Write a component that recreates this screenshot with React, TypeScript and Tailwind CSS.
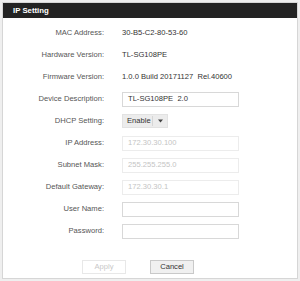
import React from 'react';

const font = { fontFamily: '"Liberation Sans", Arial, sans-serif' };

interface RowProps {
    label: string;
    children: React.ReactNode;
}

const Row: React.FC<RowProps> = ({ label, children }) => (
    <div className="flex items-center h-[22px]">
        <div className="w-[101px] text-right text-[7.6px] text-[#555]">{label}</div>
        <div className="ml-[18px] flex items-center">{children}</div>
    </div>
);

const TextBox: React.FC<{ value?: string; disabled?: boolean }> = ({ value = '', disabled }) => (
    <div
        className={`w-[117px] h-[15px] border flex items-center pl-[5px] text-[7.6px] whitespace-pre ${
            disabled ? 'border-[#ececec] text-[#c4c4c4]' : 'border-[#d8d8d8] text-[#333]'
        } bg-white`}
    >
        {value}
    </div>
);

export default function App() {
    return (
        <div className="w-[300px] h-[281px] bg-[#efefef] p-[2px]" style={font}>
            <div className="h-full bg-white border border-[#d6d6d6] flex flex-col">
                <div className="h-[15px] bg-[#232323] flex items-center pl-[10px] text-white font-bold text-[7.8px]">
                    IP Setting
                </div>
                <div className="mt-[4px] flex flex-col">
                    <Row label="MAC Address:">
                        <span className="text-[7.6px] text-[#333]">30-B5-C2-80-53-60</span>
                    </Row>
                    <Row label="Hardware Version:">
                        <span className="text-[7.6px] text-[#333]">TL-SG108PE</span>
                    </Row>
                    <Row label="Firmware Version:">
                        <span className="text-[7.6px] text-[#333] whitespace-pre">1.0.0 Build 20171127  Rel.40600</span>
                    </Row>
                    <Row label="Device Description:">
                        <TextBox value="TL-SG108PE  2.0" />
                    </Row>
                    <Row label="DHCP Setting:">
                        <div className="w-[46px] h-[14px] bg-[#ececec] border border-[#e2e2e2] flex items-center text-[7.6px] text-[#333]">
                            <span className="pl-[4px] w-[29px]">Enable</span>
                            <span className="h-[10px] w-px bg-[#d6d6d6]" />
                            <span className="flex-1 flex justify-center">
                                <svg width="5" height="4" viewBox="0 0 5 4">
                                    <path d="M0 0.5h5L2.5 3.5z" fill="#444" />
                                </svg>
                            </span>
                        </div>
                    </Row>
                    <Row label="IP Address:">
                        <TextBox value="172.30.30.100" disabled />
                    </Row>
                    <Row label="Subnet Mask:">
                        <TextBox value="255.255.255.0" disabled />
                    </Row>
                    <Row label="Default Gateway:">
                        <TextBox value="172.30.30.1" disabled />
                    </Row>
                    <Row label="User Name:">
                        <TextBox />
                    </Row>
                    <Row label="Password:">
                        <TextBox />
                    </Row>
                </div>
                <div className="mt-[18px] flex pl-[79px] gap-[24px]">
                    <button className="w-[44px] h-[14px] border border-[#e8e8e8] bg-white text-[7.6px] text-[#c8c8c8] flex items-center justify-center">
                        Apply
                    </button>
                    <button className="w-[44px] h-[14px] border border-[#c9c9c9] bg-[#f0f0f0] text-[7.6px] text-[#333] flex items-center justify-center">
                        Cancel
                    </button>
                </div>
            </div>
        </div>
    );
}
